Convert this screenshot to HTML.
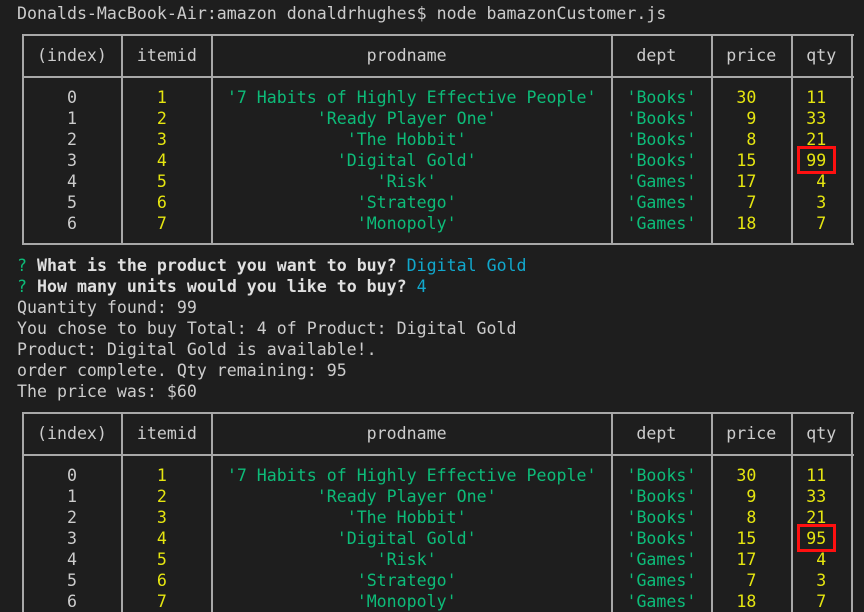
<!DOCTYPE html>
<html><head><meta charset="utf-8"><style>
html,body{margin:0;padding:0;background:#1e1e1e;width:864px;height:612px;overflow:hidden;position:relative}
pre{margin:0;position:absolute;left:17px;top:3px;font-family:"DejaVu Sans Mono","Liberation Mono",monospace;font-size:16.6px;line-height:21px;color:#cccccc;white-space:pre}
.y{color:#e5e510}.g{color:#0dbc79}.c{color:#11a8cd}b{color:#e0e0e0}
.h{position:absolute;height:2px;background:#a8a8a8}
.v{position:absolute;width:2px;background:#a8a8a8}
.r{position:absolute;border:3px solid #ff1010;box-sizing:border-box}
</style></head><body>
<div class="h" style="left:22px;width:832px;top:34px"></div>
<div class="h" style="left:22px;width:832px;top:76px"></div>
<div class="h" style="left:22px;width:832px;top:243px"></div>
<div class="v" style="left:22px;top:34px;height:211px"></div>
<div class="v" style="left:121px;top:34px;height:211px"></div>
<div class="v" style="left:211px;top:34px;height:211px"></div>
<div class="v" style="left:611px;top:34px;height:211px"></div>
<div class="v" style="left:711px;top:34px;height:211px"></div>
<div class="v" style="left:791px;top:34px;height:211px"></div>
<div class="v" style="left:851px;top:34px;height:211px"></div>

<div class="h" style="left:22px;width:832px;top:412px"></div>
<div class="h" style="left:22px;width:832px;top:454px"></div>
<div class="v" style="left:22px;top:412px;height:210px"></div>
<div class="v" style="left:121px;top:412px;height:210px"></div>
<div class="v" style="left:211px;top:412px;height:210px"></div>
<div class="v" style="left:611px;top:412px;height:210px"></div>
<div class="v" style="left:711px;top:412px;height:210px"></div>
<div class="v" style="left:791px;top:412px;height:210px"></div>
<div class="v" style="left:851px;top:412px;height:210px"></div>
<pre>Donalds-MacBook-Air:amazon donaldrhughes$ node bamazonCustomer.js

  (index)   itemid                 prodname                   dept     price   qty

     0        <span class="y">1</span>      <span class="g">'7 Habits of Highly Effective People'</span>   <span class="g">'Books'</span>    <span class="y">30</span>     <span class="y">11</span>
     1        <span class="y">2</span>               <span class="g">'Ready Player One'</span>             <span class="g">'Books'</span>     <span class="y">9</span>     <span class="y">33</span>
     2        <span class="y">3</span>                  <span class="g">'The Hobbit'</span>                <span class="g">'Books'</span>     <span class="y">8</span>     <span class="y">21</span>
     3        <span class="y">4</span>                 <span class="g">'Digital Gold'</span>               <span class="g">'Books'</span>    <span class="y">15</span>     <span class="y">99</span>
     4        <span class="y">5</span>                     <span class="g">'Risk'</span>                   <span class="g">'Games'</span>    <span class="y">17</span>      <span class="y">4</span>
     5        <span class="y">6</span>                   <span class="g">'Stratego'</span>                 <span class="g">'Games'</span>     <span class="y">7</span>      <span class="y">3</span>
     6        <span class="y">7</span>                   <span class="g">'Monopoly'</span>                 <span class="g">'Games'</span>    <span class="y">18</span>      <span class="y">7</span>

<span class="g">?</span> <b>What is the product you want to buy?</b> <span class="c">Digital Gold</span>
<span class="g">?</span> <b>How many units would you like to buy?</b> <span class="c">4</span>
Quantity found: 99
You chose to buy Total: 4 of Product: Digital Gold
Product: Digital Gold is available!.
order complete. Qty remaining: 95
The price was: $60

  (index)   itemid                 prodname                   dept     price   qty

     0        <span class="y">1</span>      <span class="g">'7 Habits of Highly Effective People'</span>   <span class="g">'Books'</span>    <span class="y">30</span>     <span class="y">11</span>
     1        <span class="y">2</span>               <span class="g">'Ready Player One'</span>             <span class="g">'Books'</span>     <span class="y">9</span>     <span class="y">33</span>
     2        <span class="y">3</span>                  <span class="g">'The Hobbit'</span>                <span class="g">'Books'</span>     <span class="y">8</span>     <span class="y">21</span>
     3        <span class="y">4</span>                 <span class="g">'Digital Gold'</span>               <span class="g">'Books'</span>    <span class="y">15</span>     <span class="y">95</span>
     4        <span class="y">5</span>                     <span class="g">'Risk'</span>                   <span class="g">'Games'</span>    <span class="y">17</span>      <span class="y">4</span>
     5        <span class="y">6</span>                   <span class="g">'Stratego'</span>                 <span class="g">'Games'</span>     <span class="y">7</span>      <span class="y">3</span>
     6        <span class="y">7</span>                   <span class="g">'Monopoly'</span>                 <span class="g">'Games'</span>    <span class="y">18</span>      <span class="y">7</span></pre>
<div class="r" style="left:797px;top:146px;width:39px;height:28px"></div>
<div class="r" style="left:797px;top:524px;width:39px;height:28px"></div>
</body></html>
